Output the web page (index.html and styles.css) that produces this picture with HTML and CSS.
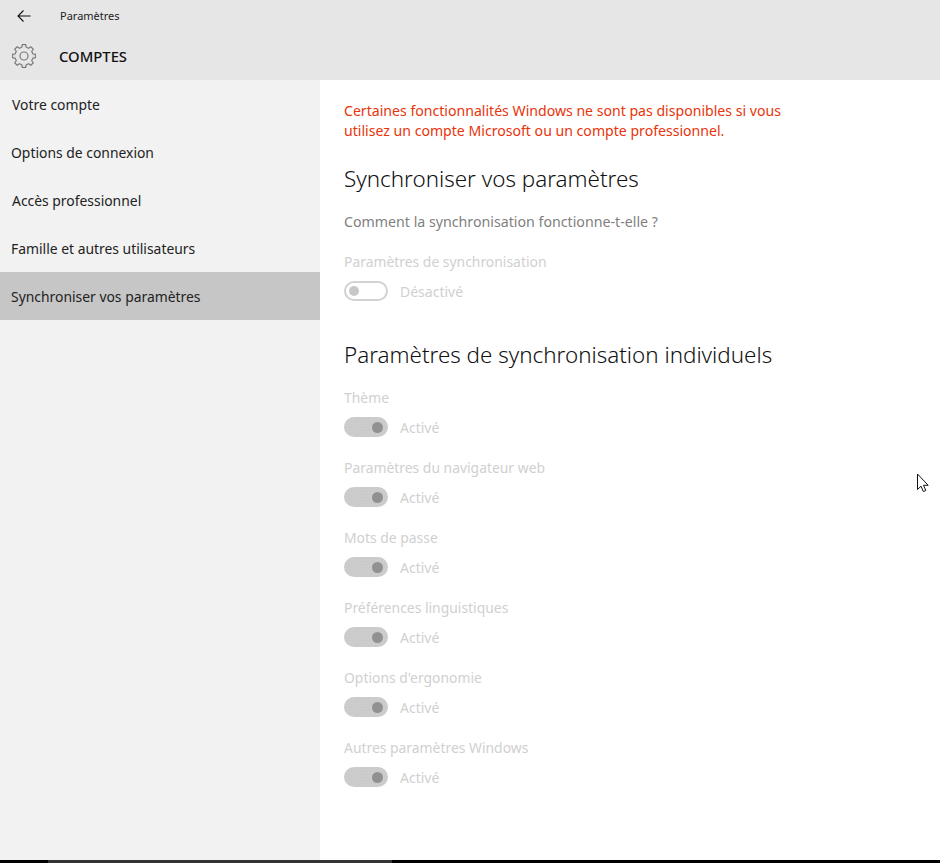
FILE: index.html
```html
<!DOCTYPE html>
<html lang="fr">
<head>
<meta charset="utf-8">
<title>Paramètres</title>
<link rel="stylesheet" href="styles.css">
</head>
<body>
<div class="app">
  <header class="header">
    <div class="titlebar">
      <svg class="back" width="16" height="14" viewBox="0 0 16 14"><path d="M14.500 7H2M7.500 1.500 2 7l5.500 5.500" fill="none" stroke="#111" stroke-width="1.100"/></svg>
      <span class="apptitle">Paramètres</span>
    </div>
    <div class="section">
      <svg class="gear" width="24" height="24" viewBox="0 0 24 24"><path d="M9.820 3.270 10.200.640H13.800L14.180 3.270 16.640 4.290 18.760 2.700 21.300 5.240 19.710 7.360 20.730 9.820 23.360 10.200V13.800L20.730 14.180 19.710 16.640 21.300 18.760 18.760 21.300 16.640 19.710 14.180 20.730 13.800 23.360H10.200L9.820 20.730 7.360 19.710 5.240 21.300 2.700 18.760 4.290 16.640 3.270 14.180 .64 13.800V10.200L3.270 9.820 4.290 7.360 2.700 5.240 5.240 2.700 7.360 4.290Z" fill="none" stroke="#7a7a7a" stroke-width="1.200" stroke-linejoin="round"/><circle cx="12" cy="12" r="4" fill="none" stroke="#7a7a7a" stroke-width="1.200"/></svg>
      <span class="sectiontitle">COMPTES</span>
    </div>
  </header>
  <div class="main">
    <nav class="nav">
      <a class="navitem i1">Votre compte</a>
      <a class="navitem">Options de connexion</a>
      <a class="navitem i1">Accès professionnel</a>
      <a class="navitem">Famille et autres utilisateurs</a>
      <a class="navitem selected">Synchroniser vos paramètres</a>
    </nav>
    <main class="content">
      <p class="warning">Certaines fonctionnalités Windows ne sont pas disponibles si vous<br>utilisez un compte Microsoft ou un compte professionnel.</p>
      <h2 class="h1">Synchroniser vos paramètres</h2>
      <p class="help">Comment la synchronisation fonctionne-t-elle ?</p>
      <div class="setting first">
        <div class="label">Paramètres de synchronisation</div>
        <div class="row"><span class="toggle off"><i></i></span><span class="state">Désactivé</span></div>
      </div>
      <h2 class="h2">Paramètres de synchronisation individuels</h2>
      <div class="setting">
        <div class="label">Thème</div>
        <div class="row"><span class="toggle on"><i></i></span><span class="state">Activé</span></div>
      </div>
      <div class="setting">
        <div class="label">Paramètres du navigateur web</div>
        <div class="row"><span class="toggle on"><i></i></span><span class="state">Activé</span></div>
      </div>
      <div class="setting">
        <div class="label">Mots de passe</div>
        <div class="row"><span class="toggle on"><i></i></span><span class="state">Activé</span></div>
      </div>
      <div class="setting">
        <div class="label">Préférences linguistiques</div>
        <div class="row"><span class="toggle on"><i></i></span><span class="state">Activé</span></div>
      </div>
      <div class="setting">
        <div class="label">Options d'ergonomie</div>
        <div class="row"><span class="toggle on"><i></i></span><span class="state">Activé</span></div>
      </div>
      <div class="setting">
        <div class="label">Autres paramètres Windows</div>
        <div class="row"><span class="toggle on"><i></i></span><span class="state">Activé</span></div>
      </div>
    </main>
  </div>
  <div class="taskbar"><span class="tb-dark"></span></div>
  <svg class="cursor" width="14" height="20" viewBox="0 0 14 20"><path d="M1.500 1v15.500l3.500-3.300 2.300 5.300 2.500-1-2.300-5.200h4.700z" fill="#fff" stroke="#111" stroke-width="1"/></svg>
</div>
</body>
</html>
```

FILE: styles.css
```css
* { box-sizing: border-box; }
html, body { margin: 0; padding: 0; }
body { font-family: "Noto Sans", "Open Sans", sans-serif; background: #fff; color: #000; }
.app { position: relative; width: 940px; height: 863px; display: flex; flex-direction: column; overflow: hidden; }
.header { height: 80px; background: #e6e6e6; flex: none; }
.titlebar { height: 31px; display: flex; align-items: center; }
.back { margin-left: 16px; flex: none; }
.apptitle { margin-left: 28px; font-size: 11px; color: #222; }
.section { height: 49px; display: flex; align-items: center; }
.gear { margin-left: 12px; flex: none; }
.sectiontitle { margin-left: 23px; font-size: 14.8px; font-weight: 500; color: #111; }
.main { flex: 1; display: flex; min-height: 0; }
.nav { width: 320px; background: #f2f2f2; flex: none; }
.navitem { display: flex; align-items: center; height: 48px; padding-left: 11px; font-size: 13.9px; color: #222; }
.navitem.i1 { padding-left: 12px; }
.navitem.selected { background: #c6c6c6; }
.content { flex: 1; padding: 21px 0 0 24px; }
.warning { margin: 0; font-size: 14.1px; line-height: 20px; color: #e8340a; }
.h1, .h2 { margin: 0; font-weight: 300; font-size: 22.4px; line-height: 28px; color: #111; }
.h1 { margin-top: 24px; }
.help { margin: 19px 0 0; font-size: 14.2px; line-height: 20px; color: #7f7f7f; }
.setting { margin-top: 10px; height: 60px; }
.setting.first { margin-top: 20px; height: 50px; }
.h2 { margin-top: 39px; margin-bottom: 19px; }
.label { font-size: 13.9px; line-height: 20px; color: #d0d0d0; }
.row { display: flex; align-items: center; height: 20px; margin-top: 9px; }
.state { margin-left: 12px; font-size: 14px; color: #d0d0d0; }
.toggle { width: 44px; height: 20px; border-radius: 10px; display: flex; align-items: center; flex: none; }
.toggle i { display: block; width: 10px; height: 10px; border-radius: 50%; }
.toggle.off { border: 2px solid #d2d2d2; padding-left: 3px; }
.toggle.off i { background: #c8c8c8; }
.toggle.on { background: #cccccc radial-gradient(circle, #c7c7c7 .7px, transparent .8px) 0 0 / 3px 3px; justify-content: flex-end; padding-right: 5px; }
.toggle.on i { width: 11px; height: 11px; background: #919191; }
.taskbar { position: absolute; left: 0; right: 0; bottom: 0; height: 3px; background: #000; }
.tb-dark { display: block; margin-left: 48px; width: 344px; height: 3px; background: #333; }
.cursor { position: absolute; left: 916px; top: 473px; }
```
